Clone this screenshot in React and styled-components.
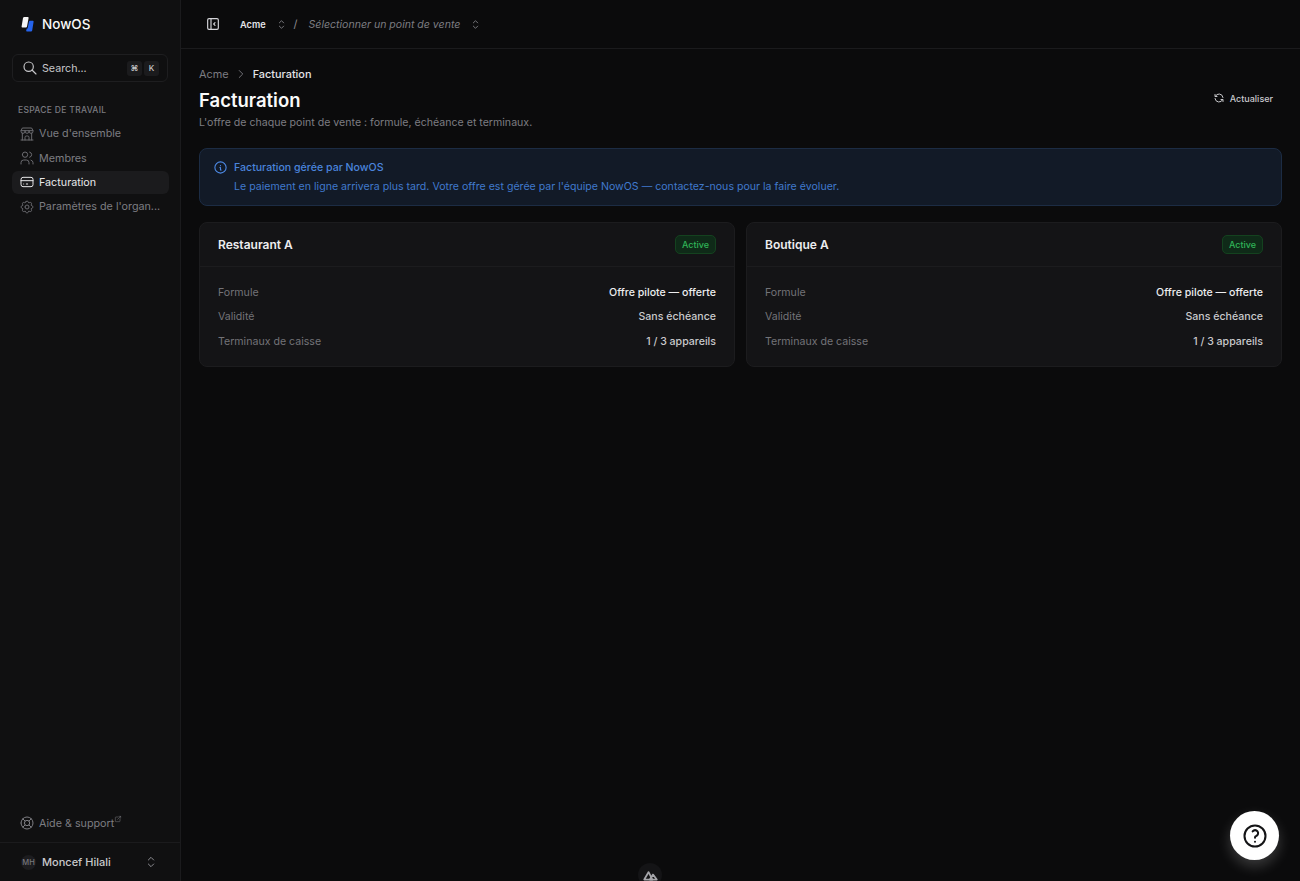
import styled, { createGlobalStyle } from "styled-components";
import {
  TbBuildingStore,
  TbChevronRight,
  TbCreditCard,
  TbExternalLink,
  TbHelp,
  TbInfoCircle,
  TbLayoutSidebarLeftCollapse,
  TbLifebuoy,
  TbRefresh,
  TbSearch,
  TbSelector,
  TbSettings,
  TbUsers,
} from "react-icons/tb";

const GlobalStyle = createGlobalStyle`
  html, body {
    margin: 0;
    height: 100%;
    background: #0b0b0c;
    color: #f4f4f5;
    font-family: Inter, "Liberation Sans", sans-serif;
    -webkit-font-smoothing: antialiased;
  }
  * { box-sizing: border-box; }
`;

const Shell = styled.div`
  display: grid;
  grid-template-columns: 181px 1fr;
  height: 881px;
  overflow: hidden;
`;

const Sidebar = styled.aside`
  display: flex;
  flex-direction: column;
  background: #101011;
  border-right: 1px solid #1b1b1d;
  height: 881px;
`;

const Brand = styled.div`
  display: flex;
  align-items: center;
  gap: 5px;
  height: 48px;
  padding-left: 19px;
  font-size: 13.5px;
  font-weight: 500;
  color: #fafafa;
`;

const SearchBox = styled.div`
  display: flex;
  align-items: center;
  height: 28px;
  margin: 6px 12px 0;
  padding: 0 8px 0 9px;
  border: 1px solid #1e1e20;
  border-radius: 6px;
  background: #0f0f10;
  font-size: 10.7px;
  color: #c6c6c9;
`;

const SearchLabel = styled.span`
  margin-left: 4px;
  flex: 1;
`;

const Kbd = styled.span`
  display: flex;
  align-items: center;
  justify-content: center;
  width: 15px;
  height: 15px;
  margin-left: 2px;
  border-radius: 3px;
  background: #1b1b1d;
  color: #c9c9cc;
  font-size: 8px;
  font-weight: 500;
`;

const SectionTitle = styled.div`
  margin: 22px 0 0 18px;
  height: 12px;
  font-size: 8.5px;
  line-height: 12px;
  font-weight: 500;
  letter-spacing: 0.3px;
  color: #7b7b80;
`;

const NavList = styled.nav`
  display: flex;
  flex-direction: column;
  gap: 1px;
  margin: 6px 11px 0 12px;
`;

const NavItem = styled.div`
  display: flex;
  align-items: center;
  gap: 4px;
  height: 23.4px;
  padding-left: 7px;
  border-radius: 6px;
  font-size: 10.75px;
  white-space: nowrap;
  background: ${(props) => (props.$active ? "#1b1b1d" : "transparent")};
  color: ${(props) => (props.$active ? "#e8e8ea" : "#7d7d82")};
  svg {
    color: ${(props) => (props.$active ? "#e8e8ea" : "#6a6a6f")};
    flex-shrink: 0;
  }
`;

const SideBottom = styled.div`
  margin-top: auto;
`;

const SupportLink = styled.div`
  display: flex;
  align-items: center;
  gap: 4px;
  height: 24px;
  margin: 0 12px 7px;
  padding-left: 7px;
  font-size: 10.75px;
  color: #7d7d82;
  svg {
    flex-shrink: 0;
  }
`;

const SupLink = styled.span`
  display: inline-flex;
  margin: -8px 0 0 -4px;
`;

const UserRow = styled.div`
  display: flex;
  align-items: center;
  height: 39px;
  padding: 0 21px;
  border-top: 1px solid #1b1b1d;
  font-size: 11px;
  font-weight: 500;
  color: #c9c9cc;
`;

const Avatar = styled.span`
  display: flex;
  align-items: center;
  justify-content: center;
  width: 15px;
  height: 15px;
  border-radius: 50%;
  background: #1c1c1f;
  color: #77777c;
  font-size: 7.5px;
  margin-right: 6px;
`;

const UserName = styled.span`
  flex: 1;
`;

const Main = styled.main`
  position: relative;
  display: flex;
  flex-direction: column;
  min-width: 0;
`;

const Topbar = styled.header`
  display: flex;
  align-items: center;
  height: 49px;
  padding-left: 24px;
  border-bottom: 1px solid #1b1b1d;
  color: #8c8c91;
`;

const OrgName = styled.span`
  margin-left: 19px;
  font-size: 9.2px;
  font-weight: 600;
  color: #e4e4e7;
`;

const OrgChevron = styled.span`
  display: inline-flex;
  margin-left: 9px;
`;

const Slash = styled.span`
  margin: 0 11px 0 6px;
  font-size: 11px;
  color: #8c8c91;
`;

const StorePicker = styled.span`
  margin-right: 9px;
  font-size: 10.55px;
  font-style: italic;
  color: #7d7d82;
`;

const Content = styled.div`
  padding: 17px 18px 0 18px;
`;

const Crumbs = styled.div`
  display: flex;
  align-items: center;
  gap: 5px;
  height: 15px;
  font-size: 10.9px;
  color: #7d7d82;
  b {
    font-weight: 500;
    color: #e4e4e7;
  }
`;

const PageHead = styled.div`
  display: flex;
  align-items: flex-start;
  justify-content: space-between;
  margin-top: 7px;
`;

const PageTitle = styled.h1`
  margin: 0;
  font-size: 18.5px;
  line-height: 24px;
  font-weight: 600;
  color: #fafafa;
`;

const PageSub = styled.p`
  margin: 4px 0 0;
  font-size: 10.6px;
  line-height: 14px;
  color: #7d7d82;
`;

const RefreshButton = styled.div`
  display: flex;
  align-items: center;
  gap: 5px;
  margin: 4px 9px 0 0;
  font-size: 9px;
  font-weight: 500;
  color: #c9c9cc;
`;

const Notice = styled.div`
  display: flex;
  gap: 6px;
  height: 58px;
  margin-top: 18px;
  padding: 9px 13px;
  border: 1px solid #1c2c44;
  border-radius: 8px;
  background: #121a27;
  color: #4079cc;
  font-size: 10.6px;
  line-height: 19px;
  svg {
    flex-shrink: 0;
    margin-top: 2px;
    color: #4d8ae6;
  }
`;

const NoticeTitle = styled.div`
  font-weight: 500;
  color: #4a84dc;
`;

const CardGrid = styled.div`
  display: grid;
  grid-template-columns: 1fr 1fr;
  gap: 11px;
  margin-top: 16px;
`;

const Card = styled.section`
  height: 145px;
  border: 1px solid #1c1c1e;
  border-radius: 8px;
  background: #141416;
`;

const CardHead = styled.div`
  display: flex;
  align-items: center;
  justify-content: space-between;
  height: 44px;
  padding: 0 18px;
  border-bottom: 1px solid #1c1c1e;
`;

const CardTitle = styled.div`
  font-size: 12px;
  font-weight: 600;
  color: #ededef;
`;

const Badge = styled.span`
  display: flex;
  align-items: center;
  height: 19px;
  padding: 0 6px;
  border: 1px solid #14421f;
  border-radius: 5px;
  background: #0f2a18;
  color: #2fb457;
  font-size: 9px;
  font-weight: 500;
`;

const CardBody = styled.div`
  display: flex;
  flex-direction: column;
  gap: 6.3px;
  padding: 17px 18px 0;
`;

const Row = styled.div`
  display: flex;
  justify-content: space-between;
  height: 18px;
  font-size: 10.6px;
  line-height: 18px;
`;

const RowLabel = styled.span`
  color: #737378;
`;

const RowValue = styled.span`
  font-weight: 500;
  color: ${(props) => (props.$strong ? "#ededef" : "#c9c9cc")};
`;

const HelpButton = styled.div`
  position: absolute;
  right: 21px;
  bottom: 21px;
  display: flex;
  align-items: center;
  justify-content: center;
  width: 49px;
  height: 49px;
  border-radius: 50%;
  background: #fff;
  color: #141416;
  box-shadow: 0 6px 14px rgba(255, 255, 255, 0.2);
`;

const DevTools = styled.div`
  position: absolute;
  left: 457px;
  bottom: -6px;
  display: flex;
  justify-content: center;
  padding-top: 7px;
  width: 24px;
  height: 24px;
  border-radius: 50%;
  background: #141416;
  color: #a6a6aa;
`;

const LogoMark = () => (
  <svg width="18" height="18" viewBox="0 0 18 18" fill="none">
    <path d="M4 3 Q4.3 2 5.4 2 H8.8 Q9.8 2 9.6 3 L8 11.4 Q7.8 12.4 7 12.4 H3.4 Q2.4 12.4 2.6 11.4 Z" fill="#f4f4f5" />
    <path d="M10 6.6 Q10.2 5.8 11 5.8 H13.8 Q14.8 5.8 14.6 6.8 L13.2 15.4 Q13 16.4 12 16.4 H8 Q7 16.4 7.2 15.4 L7.8 13.4 H8.6 Z" fill="#2563eb" />
  </svg>
);

const DevLogo = () => (
  <svg width="15" height="11" viewBox="0 0 24 17" fill="none" stroke="currentColor" strokeWidth="2.8" strokeLinejoin="round">
    <path d="M9 3 L2 15 H15 Z" />
    <path d="M16 7 L11 15 H22 Z" />
  </svg>
);

const navItems = [
  { label: "Vue d'ensemble", Icon: TbBuildingStore },
  { label: "Membres", Icon: TbUsers },
  { label: "Facturation", Icon: TbCreditCard, active: true },
  { label: "Paramètres de l'organ...", Icon: TbSettings },
];

const stores = ["Restaurant A", "Boutique A"];

function StoreCard(props) {
  return (
    <Card>
      <CardHead>
        <CardTitle>{props.name}</CardTitle>
        <Badge>Active</Badge>
      </CardHead>
      <CardBody>
        <Row>
          <RowLabel>Formule</RowLabel>
          <RowValue $strong>Offre pilote — offerte</RowValue>
        </Row>
        <Row>
          <RowLabel>Validité</RowLabel>
          <RowValue>Sans échéance</RowValue>
        </Row>
        <Row>
          <RowLabel>Terminaux de caisse</RowLabel>
          <RowValue>1 / 3 appareils</RowValue>
        </Row>
      </CardBody>
    </Card>
  );
}

export default function App() {
  return (
    <>
      <GlobalStyle />
      <Shell>
        <Sidebar>
          <Brand>
            <LogoMark />
            NowOS
          </Brand>
          <SearchBox>
            <TbSearch size={16} strokeWidth={1.75} />
            <SearchLabel>Search...</SearchLabel>
            <Kbd>⌘</Kbd>
            <Kbd>K</Kbd>
          </SearchBox>
          <SectionTitle>ESPACE DE TRAVAIL</SectionTitle>
          <NavList>
            {navItems.map((item) => (
              <NavItem key={item.label} $active={item.active}>
                <item.Icon size={16} strokeWidth={1.5} />
                {item.label}
              </NavItem>
            ))}
          </NavList>
          <SideBottom>
            <SupportLink>
              <TbLifebuoy size={16} strokeWidth={1.5} />
              Aide &amp; support
              <SupLink>
                <TbExternalLink size={8} strokeWidth={1.5} />
              </SupLink>
            </SupportLink>
            <UserRow>
              <Avatar>MH</Avatar>
              <UserName>Moncef Hilali</UserName>
              <TbSelector size={16} strokeWidth={1.5} color="#8c8c91" />
            </UserRow>
          </SideBottom>
        </Sidebar>
        <Main>
          <Topbar>
            <TbLayoutSidebarLeftCollapse size={16} strokeWidth={1.75} color="#d4d4d8" />
            <OrgName>Acme</OrgName>
            <OrgChevron>
              <TbSelector size={13} strokeWidth={1.5} />
            </OrgChevron>
            <Slash>/</Slash>
            <StorePicker>Sélectionner un point de vente</StorePicker>
            <TbSelector size={13} strokeWidth={1.5} />
          </Topbar>
          <Content>
            <Crumbs>
              Acme
              <TbChevronRight size={14} strokeWidth={1.5} />
              <b>Facturation</b>
            </Crumbs>
            <PageHead>
              <div>
                <PageTitle>Facturation</PageTitle>
                <PageSub>L'offre de chaque point de vente : formule, échéance et terminaux.</PageSub>
              </div>
              <RefreshButton>
                <TbRefresh size={12} strokeWidth={2} />
                Actualiser
              </RefreshButton>
            </PageHead>
            <Notice>
              <TbInfoCircle size={15} strokeWidth={1.75} />
              <div>
                <NoticeTitle>Facturation gérée par NowOS</NoticeTitle>
                <div>
                  Le paiement en ligne arrivera plus tard. Votre offre est gérée par l'équipe NowOS — contactez-nous pour la faire évoluer.
                </div>
              </div>
            </Notice>
            <CardGrid>
              {stores.map((name) => (
                <StoreCard key={name} name={name} />
              ))}
            </CardGrid>
          </Content>
          <HelpButton>
            <TbHelp size={28} strokeWidth={1.75} />
          </HelpButton>
          <DevTools>
            <DevLogo />
          </DevTools>
        </Main>
      </Shell>
    </>
  );
}
